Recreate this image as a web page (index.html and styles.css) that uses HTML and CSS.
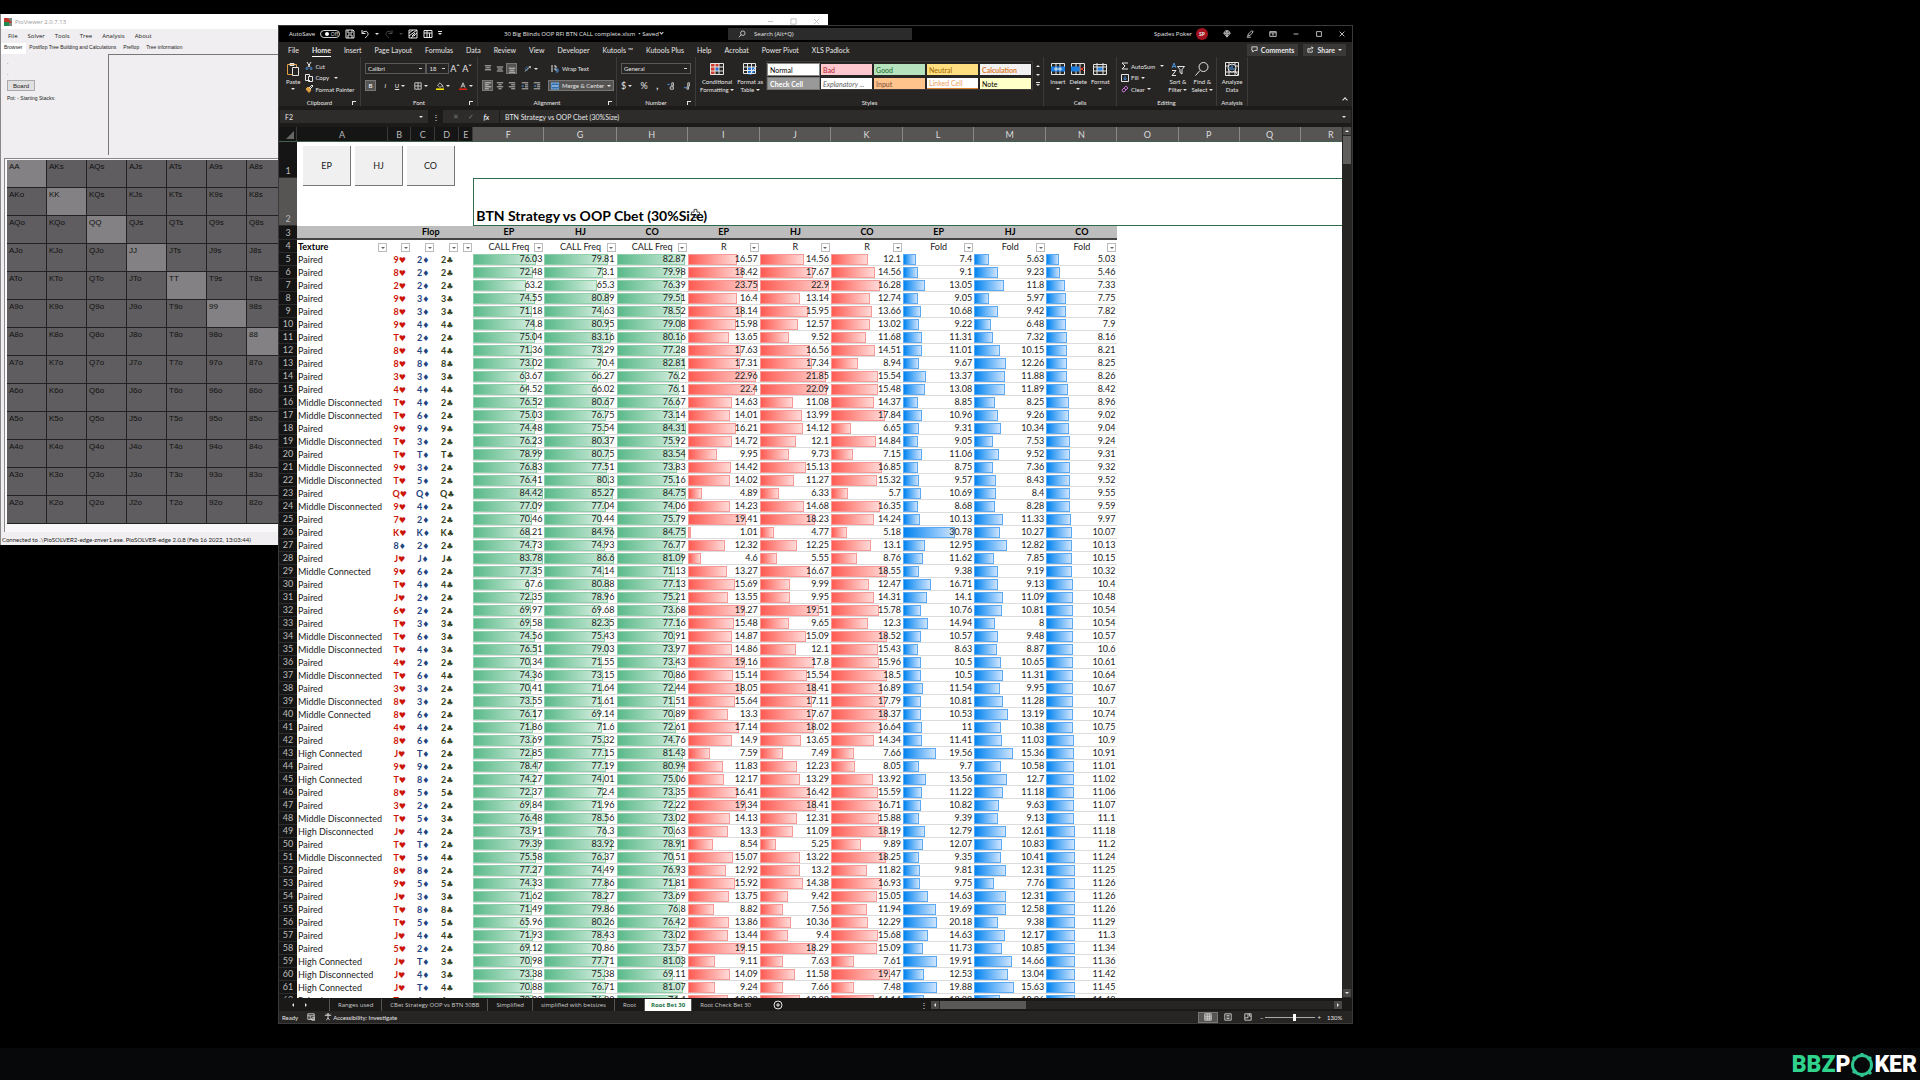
FILE: index.html
```html
<!DOCTYPE html>
<html lang="en">
<head>
  <meta charset="UTF-8" />
  <meta name="viewport" content="width=device-width, initial-scale=1.0"/>
  <title>30 Big Blinds OOP RFI BTN CALL complete.xlsm</title>
  <link rel="stylesheet" href="styles.css">
</head>
<body>

  <!-- PioViewer window -->
  <section class="window pio">
    <header class="pio-title">
      <svg class="pio-logo" viewBox="0 0 8 8"><path fill="#7d8a80" d="M0 0h8v8H0z"/><path fill="#c0392b" d="M0 0h4l4 5H0z"/><path fill="#1f8a4c" d="M0 4h5v4H0z"/></svg>
      <span class="pio-name">PioViewer 2.0.7.13</span>
      <span class="pio-controls">
        <svg viewBox="0 0 8 8"><path d="M1 4h6"/></svg>
        <svg viewBox="0 0 8 8"><path d="M1 1h6v6H1z"/></svg>
        <svg viewBox="0 0 8 8"><path d="M1 1l6 6M7 1L1 7"/></svg>
      </span>
    </header>
    <nav class="pio-menu">
      <a href="#">File</a><a href="#">Solver</a><a href="#">Tools</a><a href="#">Tree</a><a href="#">Analysis</a><a href="#">About</a>
    </nav>
    <nav class="pio-tabs">
      <a href="#" class="active">Browser</a><a href="#">Postflop Tree Building and Calculations</a><a href="#">Preflop</a><a href="#">Tree information</a>
    </nav>
    <div class="pio-body">
      <div class="pio-side">
        <p>.</p>
        <p>.</p>
        <button type="button">Board</button>
        <p>Pot: - Starting Stacks:</p>
      </div>
      <div class="pio-pane"></div>
    </div>
    <div class="pio-matrix"><div class="hands" id="hands"></div></div>
    <footer class="pio-status">Connected to .\PioSOLVER2-edge-znver1.exe. PioSOLVER-edge 2.0.8 (Feb 16 2022, 13:03:44)</footer>
  </section>

  <!-- Excel window -->
  <section class="window excel">
    <header class="titlebar">
      <div class="quick">
        <label for="autosave">AutoSave</label>
        <span class="toggle"><input type="checkbox" id="autosave"><i></i>Off</span>
        <svg viewBox="0 0 10 10"><path d="M1 1h7l1 1v7H1zM3 1v3h4V1M3 9V6h4v3"/></svg>
        <svg viewBox="0 0 10 10"><path d="M2 1v3.500h3.500M2 4.500C4 1 8.500 2 8 5.500 7.800 7 6 8 5 9"/></svg>
        <i class="caret"></i>
        <svg class="off" viewBox="0 0 10 10"><path d="M8 1v3.500H4.500M8 4.500C6 1 1.500 2 2 5.500 2.200 7 4 8 5 9"/></svg>
        <i class="caret off"></i>
        <svg viewBox="0 0 10 10"><path d="M1 1h8v8H1zM1 4l4-3M1 7l8-6M3 9l6-5M4 4l3 3M7 4L4 7"/></svg>
        <svg viewBox="0 0 10 10"><path d="M1 1.500h8v7H1zM1 4h8M4 1.500v7M6.500 4v4.500"/></svg>
        <i class="caret bar-top"></i>
      </div>
      <div class="doc">30 Big Blinds OOP RFI BTN CALL complete.xlsm &nbsp;• Saved <i class="chev"></i></div>
      <div class="search">
        <svg viewBox="0 0 10 10"><circle cx="6" cy="4" r="2.800"/><path d="M4 6L1 9"/></svg>
        <input type="text" aria-label="Search" value="Search (Alt+Q)">
      </div>
      <div class="account">
        <span>Spades Poker</span>
        <b class="avatar">SP</b>
        <svg viewBox="0 0 10 10"><path d="M3 1h4l2 3-4 5-4-5zM1 4h8M3.500 4L5 8l1.500-4L5 1z"/></svg>
        <svg viewBox="0 0 10 10"><path d="M2 8l1-3 4-4 2 1-3 4-4 2zM1 9h5"/></svg>
        <svg viewBox="0 0 10 10"><path d="M1 2h8v6H1zM1 3.500h8M5 7V4.500M4 5.500l1-1 1 1"/></svg>
        <svg viewBox="0 0 10 10"><path d="M2 5h6"/></svg>
        <svg viewBox="0 0 10 10"><path d="M2 2h6v6H2z"/></svg>
        <svg viewBox="0 0 10 10"><path d="M2 2l6 6M8 2L2 8"/></svg>
      </div>
    </header>

    <nav class="tabs">
      <a href="#">File</a><a href="#" class="active">Home</a><a href="#">Insert</a><a href="#">Page Layout</a><a href="#">Formulas</a><a href="#">Data</a><a href="#">Review</a><a href="#">View</a><a href="#">Developer</a><a href="#">Kutools ™</a><a href="#">Kutools Plus</a><a href="#">Help</a><a href="#">Acrobat</a><a href="#">Power Pivot</a><a href="#">XLS Padlock</a>
      <span class="tab-buttons">
        <button type="button"><svg viewBox="0 0 8 8"><path d="M1 1h6v4H4L2 7V5H1z"/></svg>Comments</button>
        <button type="button"><svg viewBox="0 0 8 8"><path d="M3 3H1v4h5V5M3 5c0-2 1-3 3-3M5 1l2 1-2 2"/></svg>Share <i class="caret"></i></button>
      </span>
    </nav>

    <div class="ribbon">
      <div class="group clipboard">
        <div class="tools">
          <button type="button" class="big">
            <svg viewBox="0 0 14 14"><path stroke="#e0a040" d="M6 12.500H1.500v-10h9V5"/><path d="M4 3.500V1.500h4v2zM6.500 5.500h6v8h-6z"/></svg>
            Paste<i class="caret"></i>
          </button>
          <div class="stack">
            <button type="button"><svg viewBox="0 0 8 8"><path d="M2 0l3 5M6 0L3 5"/><circle stroke="#4a90d9" cx="2" cy="6.500" r="1"/><circle stroke="#4a90d9" cx="6" cy="6.500" r="1"/></svg>Cut</button>
            <button type="button"><svg viewBox="0 0 8 8"><path d="M5 6.500H.5v-6h4v2M3.500 2.500h4v5h-4z"/></svg>Copy &nbsp;<i class="caret"></i></button>
            <button type="button"><svg viewBox="0 0 8 8"><path d="M4 3l3-3 1 1-3 3z"/><path fill="#e0a040" stroke="#e0a040" d="M3 2l3 3-2 2.500L1 4z"/></svg>Format Painter</button>
          </div>
        </div>
        <footer>Clipboard<i class="launch"></i></footer>
      </div>

      <div class="group font">
        <div class="tools rows">
          <div class="row">
            <select class="w-name" aria-label="Font"><option>Calibri</option></select><select class="w-size" aria-label="Font size"><option>18</option></select>
            <button type="button" class="letter">Aˆ</button><button type="button" class="letter">Aˇ</button>
          </div>
          <div class="row spread">
            <button type="button" class="sel"><b>B</b></button>
            <button type="button"><em>I</em></button>
            <button type="button"><u>U</u> <i class="caret"></i></button>
            <button type="button"><svg viewBox="0 0 10 10"><path d="M1 1h8v8H1zM5 1v8M1 5h8"/></svg><i class="caret"></i></button>
            <button type="button"><svg viewBox="0 0 10 10"><path d="M2 4l3-3 3 3-3 3zM8 4l1 3"/><path fill="#ffe800" stroke="none" d="M0 8h10v2H0z"/></svg><i class="caret"></i></button>
            <button type="button"><svg viewBox="0 0 10 10"><path d="M2.500 7L5 1l2.500 6M3.500 5h3"/><path fill="#e02010" stroke="none" d="M0 8h10v2H0z"/></svg><i class="caret"></i></button>
          </div>
        </div>
        <footer>Font<i class="launch"></i></footer>
      </div>

      <div class="group align">
        <div class="tools">
          <div class="grid-icons">
            <button type="button"><svg viewBox="0 0 10 10"><path d="M1 1h8M2 3.500h6M1 6h8"/></svg></button>
            <button type="button"><svg viewBox="0 0 10 10"><path d="M1 2.500h8M2 5h6M1 7.500h8"/></svg></button>
            <button type="button" class="sel"><svg viewBox="0 0 10 10"><path d="M1 4h8M2 6.500h6M1 9h8"/></svg></button>
            <button type="button" class="wide"><svg viewBox="0 0 10 10"><path d="M1 8l7-6M6 2h2v2"/><path stroke="#4a90d9" d="M1 4l3 3M3 2l2 3"/></svg><i class="caret"></i></button>
            <button type="button" class="sel"><svg viewBox="0 0 10 10"><path d="M1 1h8M1 3.500h5M1 6h8M1 8.500h5"/></svg></button>
            <button type="button"><svg viewBox="0 0 10 10"><path d="M1 1h8M3 3.500h4M1 6h8M3 8.500h4"/></svg></button>
            <button type="button"><svg viewBox="0 0 10 10"><path d="M1 1h8M4 3.500h5M1 6h8M4 8.500h5"/></svg></button>
            <button type="button" class="wide two"><svg viewBox="0 0 10 10"><path d="M1 1h8M5 3.500h4M5 6h4M1 8.500h8"/><path stroke="#4a90d9" d="M4 5H1M2 4L1 5l1 1"/></svg><svg viewBox="0 0 10 10"><path d="M1 1h8M5 3.500h4M5 6h4M1 8.500h8"/><path stroke="#4a90d9" d="M1 5h3M3 4l1 1-1 1"/></svg></button>
          </div>
          <div class="wrap-merge">
            <button type="button"><svg viewBox="0 0 8 8"><path d="M1 0v7M3 1h2v2M3 4h2v2"/><path stroke="#4a90d9" d="M4 4h3v3H5"/></svg>Wrap Text</button>
            <button type="button" class="sel"><svg viewBox="0 0 8 8"><path fill="#2b6cb0" stroke="#7fb4e8" d="M0 1h8v6H0z"/><path d="M1 4h6"/></svg>Merge &amp; Center <i class="caret"></i></button>
          </div>
        </div>
        <footer>Alignment<i class="launch"></i></footer>
      </div>

      <div class="group number">
        <div class="tools rows">
          <div class="row"><select class="w-full" aria-label="Number format"><option>General</option></select></div>
          <div class="row spread">
            <button type="button" class="letter">$ <i class="caret"></i></button>
            <button type="button" class="letter">%</button>
            <button type="button" class="letter"><b>,</b></button>
            <button type="button"><svg viewBox="0 0 10 10"><path stroke="#4a90d9" d="M4 3H1M2 2L1 3l1 1"/><path d="M8 1v4H6V1zM4 6v3h4V6z"/></svg></button>
            <button type="button"><svg viewBox="0 0 10 10"><path d="M8 1v4H6V1zM7 6v3H5V6z"/><path stroke="#4a90d9" d="M1 7h3M3 6l1 1-1 1"/></svg></button>
          </div>
        </div>
        <footer>Number<i class="launch"></i></footer>
      </div>

      <div class="group styles">
        <div class="tools">
          <button type="button" class="big">
            <svg viewBox="0 0 14 14"><path fill="#d03a2b" stroke="none" d="M0 1h9v4H0zM0 5h5v7H0z"/><path fill="#2b6cd0" stroke="none" d="M5 5h4v4H5z"/><path d="M.5 1.500h13v11H.5zM5 1v11M9 1v11M0 5h14M0 9h14"/></svg>
            Conditional<span>Formatting <i class="caret"></i></span>
          </button>
          <button type="button" class="big">
            <svg viewBox="0 0 14 14"><path fill="#1f6fd0" stroke="none" d="M4 5h9v4l-5 4-4-1z"/><path d="M.5 1.500h12v10H.5zM4.500 1v10M8.500 1v10M0 5h13M0 8.500h13M13.500 4L7 12"/></svg>
            Format as<span>Table <i class="caret"></i></span>
          </button>
          <div class="gallery">
            <button type="button" class="st normal">Normal</button>
            <button type="button" class="st bad">Bad</button>
            <button type="button" class="st good">Good</button>
            <button type="button" class="st neutral">Neutral</button>
            <button type="button" class="st calc">Calculation</button>
            <button type="button" class="st check">Check Cell</button>
            <button type="button" class="st expl">Explanatory ...</button>
            <button type="button" class="st inputc">Input</button>
            <button type="button" class="st linked">Linked Cell</button>
            <button type="button" class="st note">Note</button>
          </div>
          <div class="gallery-nav"><i class="caret up"></i><i class="caret"></i><i class="caret bar-top"></i></div>
        </div>
        <footer>Styles</footer>
      </div>

      <div class="group cells">
        <div class="tools">
          <button type="button" class="big"><svg viewBox="0 0 14 14"><path d="M.5 1.500h13v11H.5zM5 1v11M9 1v11"/><path fill="#1f7fe0" stroke="#1f7fe0" d="M0 5h14v4H0z"/><path d="M3 7h8M5 5v4M9 5v4"/></svg>Insert<i class="caret"></i></button>
          <button type="button" class="big"><svg viewBox="0 0 14 14"><path d="M.5 1.500h13v11H.5zM5 1v11M9 1v11"/><path fill="#1f7fe0" stroke="#1f7fe0" d="M0 5h8v4H0z"/><path stroke="#e03a2b" d="M9 5l4 4M13 5L9 9"/></svg>Delete<i class="caret"></i></button>
          <button type="button" class="big"><svg viewBox="0 0 14 14"><path fill="#1f7fe0" stroke="none" d="M4 5h6v4H4z"/><path d="M.5 2.500h13v10H.5zM4 1v11M10 1v11M0 5h14M0 9h14"/></svg>Format<i class="caret"></i></button>
        </div>
        <footer>Cells</footer>
      </div>

      <div class="group editing">
        <div class="tools">
          <div class="stack">
            <button type="button"><svg viewBox="0 0 8 8"><path d="M7 1H1l3 3-3 3h6"/></svg>AutoSum &nbsp; <i class="caret"></i></button>
            <button type="button"><svg viewBox="0 0 8 8"><path d="M.5.5h7v7h-7z"/><path stroke="#4a90d9" d="M4 2v4M2.500 4.500L4 6l1.500-1.500"/></svg>Fill <i class="caret"></i></button>
            <button type="button"><svg viewBox="0 0 8 8"><path stroke="#c070d0" d="M1 5l4-4 2 2-4 4H2zM3 3l2 2"/></svg>Clear <i class="caret"></i></button>
          </div>
          <button type="button" class="big"><svg viewBox="0 0 14 14"><path stroke="#4a90d9" d="M1 6l2-5 2 5M1.500 4.500h3"/><path d="M1 8.500h4l-4 5h4M6.500 4.500h7L11 7.500V12l-2-1.500v-3z"/></svg>Sort &amp;<span>Filter <i class="caret"></i></span></button>
          <button type="button" class="big"><svg viewBox="0 0 14 14"><circle cx="8.500" cy="5" r="4.500"/><path d="M5 8.500L.5 13.500"/></svg>Find &amp;<span>Select <i class="caret"></i></span></button>
        </div>
        <footer>Editing</footer>
      </div>

      <div class="group analysis">
        <div class="tools">
          <button type="button" class="big"><svg viewBox="0 0 14 14"><path d="M.5.500h13v13H.5zM0 4h14M0 10h14M4 0v14M10 0v14"/><circle fill="#262524" cx="7" cy="6" r="4"/><path stroke="#4aa0f0" d="M5 8V5M7 8V3M9 8V6"/><path d="M10 9l3 4"/></svg>Analyze<span>Data</span></button>
        </div>
        <footer>Analysis</footer>
      </div>
      <i class="collapse"></i>
    </div>

    <div class="formula-bar">
      <div class="name-box"><input type="text" aria-label="Name box" value="F2"><i class="caret"></i></div>
      <span class="dots">⋮</span>
      <div class="fx"><span>✕</span><span>✓</span><b>fx</b></div>
      <div class="formula"><input type="text" aria-label="Formula" value="BTN Strategy vs OOP Cbet (30%Size)"><i class="caret"></i></div>
    </div>

    <div class="sheet-area">
      <div class="sheet">
        <table class="grid">
          <colgroup>
            <col class="c-head"><col class="c-a"><col class="c-b"><col class="c-c"><col class="c-c"><col class="c-e">
            <col class="c-f"><col class="c-g"><col class="c-f"><col class="c-g"><col class="c-f"><col class="c-g"><col class="c-f"><col class="c-g"><col class="c-f">
            <col class="c-o"><col class="c-o"><col class="c-o"><col class="c-o">
          </colgroup>
          <thead>
            <tr class="letters" id="letters"></tr>
          </thead>
          <tbody id="rows">
            <tr class="r1">
              <th>1</th>
              <td colspan="18">
                <div class="macros"><button type="button">EP</button><button type="button">HJ</button><button type="button">CO</button></div>
              </td>
            </tr>
            <tr class="r2">
              <th>2</th>
              <td colspan="5"></td>
              <td colspan="13" class="picked">BTN Strategy vs OOP Cbet (30%Size)</td>
            </tr>
            <tr class="r3">
              <th>3</th>
              <td></td><td colspan="4">Flop</td>
              <td>EP</td><td>HJ</td><td>CO</td><td>EP</td><td>HJ</td><td>CO</td><td>EP</td><td>HJ</td><td>CO</td>
              <td colspan="4" class="blank"></td>
            </tr>
            <tr class="r4" id="filters"></tr>
          </tbody>
        </table>
        <svg class="pointer" viewBox="0 0 12 12"><path d="M4.500 1.500h3v3h3v3h-3v3h-3v-3h-3v-3h3z"/></svg>
      </div>
      <div class="vscroll"><i class="box"><i class="caret up"></i></i><i class="thumb"></i><i class="box end"><i class="caret"></i></i></div>
    </div>

    <nav class="sheets">
      <span class="arrows"><i class="tri left"></i><i class="tri"></i></span>
      <a href="#">Ranges used</a><a href="#">CBet Strategy OOP vs BTN 30BB</a><a href="#">Simplified</a><a href="#">simplified with betsizes</a><a href="#">Root</a><a href="#" class="active">Root Bet 30</a><a href="#">Root Check Bet 30</a>
      <button type="button" class="add" aria-label="New sheet"><svg viewBox="0 0 10 10"><circle cx="5" cy="5" r="4"/><path d="M5 3v4M3 5h4"/></svg></button>
      <span class="dots">⋮</span>
      <div class="hscroll"><i class="box"><i class="tri left"></i></i><i class="thumb"></i><i class="box end"><i class="tri"></i></i></div>
    </nav>

    <footer class="status">
      <span>Ready</span>
      <svg viewBox="0 0 10 10"><path d="M1 1h8v7H1zM1 3.500h8M4 3.500V8M6 6h4v3H6z"/></svg>
      <span class="acc"><svg viewBox="0 0 10 10"><path d="M1 3h8M5 3v3M5 6L3 9M5 6l2 3M2 1l1 1M8 1L7 2"/><circle cx="5" cy="1.500" r="1"/></svg>Accessibility: Investigate</span>
      <div class="views">
        <button type="button" class="sel" aria-label="Normal view"><svg viewBox="0 0 10 10"><path d="M1 1h8v8H1zM1 4h8M1 6.500h8M4 1v8M6.500 1v8"/></svg></button>
        <button type="button" aria-label="Page layout"><svg viewBox="0 0 10 10"><path d="M1 1h8v8H1zM3 3h4M3 5h4M3 7h4"/></svg></button>
        <button type="button" aria-label="Page break preview"><svg viewBox="0 0 10 10"><path d="M1 1h8v8H1zM1 6h4V1M7 1v3h2"/></svg></button>
      </div>
      <div class="zoom"><span>−</span><input type="range" min="10" max="250" value="150" aria-label="Zoom"><span>+</span><span class="pct">130%</span></div>
    </footer>
  </section>

  <div class="brand">
    <span class="bbz">BBZ</span><span>P</span><svg viewBox="0 0 24 24"><circle cx="12" cy="12" r="9.500"/><path d="M12 0v4M12 20v4M3 4l3 3M18 18l3 3M21 4l-3 3M3 20l3-3"/></svg><span>KER</span>
  </div>

  <script src="script.js"></script>
</body>
</html>
```

FILE: styles.css
```css
* {
  box-sizing: border-box;
}

body {
  margin: 0;
  min-height: 100vh;
  background: linear-gradient(#000 97%, #06080a 97%);
  font-family: "Open Sans", "Noto Sans", sans-serif;
  font-size: 6px;
  overflow: hidden;
}

a {
  color: inherit;
  text-decoration: none;
}

p {
  margin: 0;
}

button, input, select {
  font: inherit;
  color: inherit;
  background: none;
  border: 0;
  border-radius: 0;
  padding: 0;
  margin: 0;
  min-width: 0;
}

select {
  appearance: none;
}

svg {
  flex: none;
  fill: none;
  stroke: currentColor;
}

.window {
  position: absolute;
  display: flex;
  flex-direction: column;
  overflow: hidden;
}

/* ---------- PioViewer ---------- */

.pio {
  left: 0;
  top: 14px;
  width: 828px;
  height: 531px;
  background: #f0eef0;
  color: #222;
  border-left: 1px solid #888;
}

.pio-title {
  display: flex;
  align-items: center;
  gap: 3px;
  height: 15px;
  padding-left: 3px;
  background: #fff;
  color: #999;
}

.pio-logo {
  width: 8px;
  height: 8px;
  stroke: none;
}

.pio-controls {
  display: flex;
  gap: 16px;
  margin: 0 8px 0 auto;
  color: #bbb;
}

.pio-controls svg {
  width: 7px;
  height: 7px;
}

.pio-menu {
  display: flex;
  align-items: center;
  gap: 10px;
  height: 14px;
  padding-left: 7px;
}

.pio-tabs {
  display: flex;
  height: 11px;
  line-height: 9px;
  font-family: "Liberation Sans", Arial, sans-serif;
  font-size: 5px;
}

.pio-tabs a {
  padding: 0 4px 0 3px;
}

.pio-tabs .active {
  background: #fff;
}

.pio-body {
  display: flex;
  height: 101px;
}

.pio-side {
  display: flex;
  flex-direction: column;
  align-items: flex-start;
  gap: 3px;
  width: 107px;
  padding: 4px 6px;
  line-height: 8px;
  font-family: "Liberation Sans", Arial, sans-serif;
}

.pio-side button {
  width: 28px;
  height: 11px;
  background: #e1e0e1;
  border: 1px solid #aaa;
}

.pio-side p {
  font-size: 5px;
}

.pio-pane {
  flex: 1;
  border-left: 1px solid #777;
  border-top: 1px solid #777;
}

.pio-matrix {
  margin: 3px 0 0 3px;
  padding: 1px 0 8px 2px;
  border-left: 1px solid #888;
  border-top: 1px solid #888;
  background: #f8f8f8;
}

.hands {
  display: grid;
  grid-template-columns: repeat(7, 40px);
  grid-auto-rows: 28px;
}

.hands div {
  background: #5f5d5f;
  border-right: 1px solid #222;
  border-bottom: 1px solid #222;
  padding: 2px;
  font: 8px/9px "Liberation Sans", Arial, sans-serif;
  color: #111;
}

.hands .pair {
  background: #838183;
}

.pio-status {
  margin-top: auto;
  padding-left: 1px;
  height: 11px;
  line-height: 12px;
  font-family: Lato, "Open Sans", sans-serif;
}

/* ---------- Excel ---------- */

.excel {
  left: 278px;
  right: 567px;
  top: 25px;
  bottom: 56px;
  background: #262524;
  color: #e6e6e6;
  border: 1px solid #3a3a3a;
}

.excel svg {
  width: 8px;
  height: 8px;
}

.caret {
  display: inline-block;
  flex: none;
  border: 2px solid transparent;
  border-top-color: currentColor;
  border-bottom: 0;
  vertical-align: middle;
}

.caret.up {
  transform: rotate(180deg);
}

.caret.bar-top {
  position: relative;
}

.caret.bar-top::before {
  content: "";
  position: absolute;
  left: -2px;
  top: -4px;
  width: 4px;
  height: 1px;
  background: currentColor;
}

.off {
  opacity: .3;
}

.titlebar {
  display: grid;
  grid-template-columns: 225px 224px 184px 1fr;
  align-items: center;
  height: 16px;
  flex: none;
  background: #000;
}

.quick {
  display: flex;
  align-items: center;
  gap: 5px;
  padding-left: 10px;
}

.quick svg {
  width: 10px;
  height: 10px;
}

.toggle {
  display: flex;
  align-items: center;
  justify-content: space-around;
  width: 20px;
  height: 8px;
  border: 1px solid #ccc;
  border-radius: 4px;
  font-size: 5px;
  line-height: 6px;
}

.toggle input {
  appearance: none;
  width: 0;
}

.toggle i {
  width: 4px;
  height: 4px;
  border-radius: 50%;
  background: #fff;
}

.chev {
  display: inline-block;
  width: 3px;
  height: 3px;
  border-right: 1px solid;
  border-bottom: 1px solid;
  transform: rotate(45deg);
  vertical-align: 2px;
}

.search {
  display: flex;
  align-items: center;
  gap: 8px;
  height: 12px;
  padding-left: 10px;
  background: #2b2b2b;
}

.search input {
  flex: 1;
}

.account {
  display: flex;
  align-items: center;
  justify-content: flex-end;
  gap: 15px;
  padding-right: 6px;
}

.account span {
  margin-right: -11px;
}

.avatar {
  width: 12px;
  height: 12px;
  border-radius: 50%;
  background: #a4121f;
  font-size: 5px;
  line-height: 12px;
  text-align: center;
}

.tabs {
  display: flex;
  gap: 13px;
  align-items: center;
  height: 15px;
  flex: none;
  padding: 0 6px 0 9px;
  font-size: 7px;
  font-family: Lato, "Open Sans", sans-serif;
}

.tabs a {
  line-height: 12px;
  white-space: nowrap;
}

.tabs .active {
  font-weight: bold;
  box-shadow: 0 1px #fff;
}

.tab-buttons {
  display: flex;
  gap: 5px;
  margin-left: auto;
}

.tab-buttons button {
  display: flex;
  align-items: center;
  gap: 3px;
  height: 12px;
  padding: 0 4px;
  background: #3a3938;
  font-weight: bold;
}

.tab-buttons svg {
  width: 7px;
  height: 7px;
}

.ribbon {
  display: flex;
  height: 49px;
  flex: none;
  font-family: Lato, "Open Sans", sans-serif;
  font-size: 6px;
}

.group {
  display: flex;
  flex-direction: column;
  border-right: 1px solid #3c3b3a;
  padding: 4px 4px 0;
}

.clipboard { width: 82px; }
.font { width: 117px; }
.align { width: 139px; }
.number { width: 79px; }
.styles { width: 348px; }
.cells { width: 73px; }
.editing { width: 100px; }
.analysis { width: 31px; }

.group footer {
  position: relative;
  text-align: center;
  line-height: 14px;
}

.launch {
  position: absolute;
  right: 0;
  top: 5px;
  width: 4px;
  height: 4px;
  border-left: 1px solid;
  border-top: 1px solid;
}

.tools {
  display: flex;
  flex: none;
  height: 35px;
  gap: 4px;
}

.clipboard .tools {
  gap: 5px;
  padding-left: 3px;
}

.tools button {
  display: flex;
  align-items: center;
  gap: 2px;
  white-space: nowrap;
}

.tools .big {
  flex-direction: column;
  justify-content: flex-start;
  gap: 0;
  line-height: 8px;
  flex: none;
}

.tools .big svg {
  width: 14px;
  height: 14px;
  margin: 1px 0 2px;
}

.tools .big .caret {
  margin-top: 2px;
}

.tools .big span .caret {
  margin-top: 0;
}

.cells .tools,
.analysis .tools {
  justify-content: center;
}

.stack {
  display: flex;
  flex-direction: column;
  justify-content: space-between;
  padding-bottom: 2px;
}

.stack button {
  height: 10px;
}

.tools.rows {
  flex-direction: column;
  gap: 6px;
  padding-top: 2px;
}

.row {
  display: flex;
  align-items: center;
  height: 11px;
}

.spread {
  justify-content: space-between;
}

.row select {
  height: 11px;
  padding: 0 2px;
  border: 1px solid #5a5958;
  background: linear-gradient(#ccc, #ccc) no-repeat right 3px center / 3px 1px;
}

.w-name { width: 62px; }
.w-size { width: 23px; }
.w-full { width: 70px; }

.letter {
  font-size: 9px;
}

.font .letter {
  width: 11px;
  margin-left: 1px;
}

.sel {
  background: #555453;
  outline: 1px solid #777;
  outline-offset: -1px;
}

.row .sel {
  width: 11px;
  height: 11px;
  justify-content: center;
}

.grid-icons {
  display: grid;
  grid-template-columns: 11px 11px 11px 26px;
  grid-auto-rows: 11px;
  gap: 6px 1px;
  padding-top: 2px;
}

.grid-icons button {
  justify-content: center;
}

.grid-icons .two {
  gap: 4px;
}

.wrap-merge {
  display: flex;
  flex-direction: column;
  gap: 6px;
  padding-top: 2px;
}

.wrap-merge button {
  height: 11px;
  padding: 0 3px;
  gap: 3px;
}

.gallery {
  display: grid;
  grid-template-columns: repeat(5, 51px);
  grid-auto-rows: 11px;
  gap: 3px 2px;
  height: 29px;
  padding: 2px 1px;
  border: 1px solid #3c3b3a;
  font-size: 7px;
}

.gallery .st {
  padding: 0 2px;
  color: #000;
  background: #fff;
}

.gallery .normal { outline: 1px solid #888; }
.gallery .bad { background: #ffc7ce; color: #b0202a; }
.gallery .good { background: #b6e3bd; color: #17692a; }
.gallery .neutral { background: #ffdf80; color: #9c6500; }
.gallery .calc { background: #f2f2f2; color: #e08030; font-weight: bold; }
.gallery .check { background: #999; color: #fff; font-weight: bold; outline: 1px solid #777; }
.gallery .expl { color: #666; font-style: italic; }
.gallery .inputc { background: #ffc48c; color: #7a4a3a; }
.gallery .linked { color: #f0a060; border-bottom: 1px solid #e08030; }
.gallery .note { background: #ffffc8; }

.gallery-nav {
  display: flex;
  flex-direction: column;
  justify-content: space-around;
  height: 29px;
}

.styles .tools {
  gap: 3px;
}

.collapse {
  align-self: flex-end;
  margin: 0 5px 4px auto;
  width: 4px;
  height: 4px;
  border-left: 1px solid;
  border-top: 1px solid;
  transform: rotate(45deg);
}

.formula-bar {
  display: flex;
  align-items: center;
  height: 21px;
  flex: none;
  padding: 0 1px;
  background: #1c1b1a;
  font-family: Lato, "Open Sans", sans-serif;
  font-size: 7px;
}

.formula-bar > div {
  display: flex;
  align-items: center;
  height: 13px;
  padding: 0 5px;
  background: #2d2c2b;
}

.name-box {
  width: 148px;
}

.name-box input, .formula input {
  flex: 1;
}

.dots {
  width: 15px;
  text-align: center;
  font-size: 8px;
}

.fx {
  width: 56px;
  justify-content: space-around;
}

.fx span {
  color: #777;
}

.fx b {
  font-style: italic;
}

.formula {
  flex: 1;
  margin-left: 1px;
}

/* ---------- Worksheet ---------- */

.sheet-area {
  display: flex;
  flex: 1;
  min-height: 0;
}

.sheet {
  position: relative;
  flex: 1;
  min-width: 0;
  overflow: hidden;
  background: #fff;
}

.grid {
  width: 1083px;
  table-layout: fixed;
  border-spacing: 0;
  color: #222;
  font: 9px/12px Lato, "Open Sans", sans-serif;
}

.c-head { width: 18px; }
.c-a { width: 91px; }
.c-b { width: 23px; }
.c-c { width: 24px; }
.c-e { width: 14px; }
.c-f { width: 71px; }
.c-g { width: 72px; }
.c-o { width: 61px; }

.grid td, .grid th {
  position: relative;
  padding: 0;
  white-space: nowrap;
}

.grid th {
  background: #151515;
  color: #bbb;
  font-weight: normal;
  border-bottom: 1px solid #2c2c2c;
}

.grid .letters th {
  height: 15px;
  padding-top: 1px;
  border-right: 1px solid #3a3a3a;
  border-bottom: 1px solid #41614f;
}

.grid .letters .on {
  background: #565554;
  color: #ddd;
  border-right-color: #888;
}

.letters .corner::after {
  content: "";
  position: absolute;
  right: 2px;
  bottom: 2px;
  border: 4px solid #666;
  border-left-color: transparent;
  border-top-color: transparent;
}

.r1 td { height: 36px; }
.r2 td { height: 48px; }
.r1 th, .r2 th { vertical-align: bottom; }

.grid .r2 th {
  background: #565554;
}

.macros {
  position: absolute;
  left: 6px;
  top: 4px;
  z-index: 1;
  display: flex;
  gap: 4px;
}

.macros button {
  width: 48px;
  height: 40px;
  background: #f0f0f0;
  border-right: 1px solid #777;
  border-bottom: 1px solid #777;
  font-size: 9px;
}

.grid .picked {
  border: 1px solid #2f6b4c;
  border-right: 0;
  padding-left: 2px;
  vertical-align: bottom;
  font-size: 14px;
  line-height: 18px;
  font-weight: bold;
  color: #000;
}

.r3 td {
  height: 14px;
  background: #bdbdbd;
  border-bottom: 2px solid #444;
  font-weight: bold;
  text-align: center;
  color: #000;
}

.r3 .blank {
  background: #fff;
  border: 0;
}

.r4 td {
  height: 13px;
  text-align: center;
}

.r4 td:nth-child(2) {
  font-weight: bold;
  text-align: left;
  color: #000;
}

.filter {
  position: absolute;
  right: 1px;
  bottom: 1px;
  display: flex;
  align-items: center;
  justify-content: center;
  width: 9px;
  height: 9px;
  background: #fff;
  border: 1px solid #bbb;
  color: #666;
}

.data td, .data th {
  height: 13px;
}

.grid .texture,
.grid .r4 td:nth-child(2) {
  padding-left: 1px;
}

.card {
  text-align: center;
  font-weight: bold;
}

.card span {
  font: 8px/8px "DejaVu Sans", sans-serif;
}

.card.h { color: #cc1408; }
.card.d { color: #1f4480; }
.card.c { color: #34401c; }

.num {
  text-align: right;
  border-bottom: 1px solid #dcdcdc;
}

.grid .num {
  padding-right: 2px;
}

.num span {
  position: relative;
}

.num .bar {
  position: absolute;
  left: 0;
  top: 1px;
  height: 11px;
  border: 1px solid;
}

.green .bar { background: linear-gradient(90deg, #5ab98a, #d6efe0); border-color: #8fd0ab; }
.red .bar { background: linear-gradient(90deg, #ff5b52, #ffdad8); border-color: #f79a97; }
.blue .bar { background: linear-gradient(90deg, #0083f0, #cde4ff); border-color: #5aa9f2; }

.pointer {
  position: absolute;
  left: 411px;
  top: 81px;
  stroke: #333;
}

.excel .pointer {
  width: 11px;
  height: 11px;
}

.vscroll {
  display: flex;
  flex-direction: column;
  width: 10px;
  background: #262524;
}

.box {
  display: flex;
  align-items: center;
  justify-content: center;
  width: 8px;
  height: 8px;
  background: #4a4948;
}

.end {
  margin-top: auto;
}

.vscroll .box {
  margin-left: 1px;
}

.vscroll .end {
  margin-bottom: 1px;
}

.vscroll .thumb {
  width: 8px;
  height: 28px;
  margin: 1px;
  background: #5f5e5d;
}

.sheets {
  display: flex;
  align-items: center;
  height: 13px;
  flex: none;
  background: #1a1918;
  line-height: 12px;
}

.arrows {
  display: flex;
  gap: 11px;
  width: 50px;
  padding-left: 13px;
}

.tri {
  border: 2px solid transparent;
  border-left-color: currentColor;
  border-right: 0;
}

.tri.left {
  transform: rotate(180deg);
}

.sheets a {
  padding: 0 8px;
  border-left: 1px solid #555;
  color: #ccc;
  white-space: nowrap;
}

.sheets .active {
  padding: 0 6px;
  background: #fff;
  color: #217346;
  font-weight: bold;
}

.add {
  display: flex;
  margin-left: 14px;
}

.excel .add svg {
  width: 10px;
  height: 10px;
}

.sheets .dots {
  margin-left: auto;
}

.hscroll {
  display: flex;
  align-items: center;
  width: 411px;
  margin-right: 10px;
  background: #262524;
}

.hscroll .thumb {
  width: 86px;
  height: 8px;
  margin-left: 1px;
  background: #5a5958;
}

.hscroll .end {
  margin: 0 0 0 auto;
}

.status {
  display: flex;
  align-items: center;
  gap: 9px;
  height: 12px;
  flex: none;
  padding-left: 3px;
  font-family: Lato, "Open Sans", sans-serif;
}

.acc {
  display: flex;
  align-items: center;
  gap: 1px;
}

.views {
  display: flex;
  margin-left: auto;
}

.views button {
  display: flex;
  align-items: center;
  justify-content: center;
  width: 20px;
  height: 11px;
}

.zoom {
  display: flex;
  align-items: center;
  gap: 2px;
  width: 92px;
  margin-left: -7px;
}

.zoom input {
  appearance: none;
  width: 50px;
  height: 7px;
  background: linear-gradient(#aaa, #aaa) no-repeat center / 100% 1px;
}

.zoom input::-webkit-slider-thumb {
  appearance: none;
  width: 3px;
  height: 7px;
  background: #fff;
}

.pct {
  margin-left: 4px;
}

/* ---------- Brand ---------- */

.brand {
  position: absolute;
  right: 3px;
  bottom: 2px;
  display: flex;
  align-items: center;
  color: #fff;
  font: 900 23px/26px Roboto, sans-serif;
}

.brand .bbz {
  color: #2fd38c;
}

.brand svg {
  width: 24px;
  height: 24px;
  stroke: #2fc590;
  stroke-width: 3;
}
```

FILE: script.js
```js
const columns = [
  // tone, pixels per unit of value in a 71px wide cell
  ["green", 0.825], ["green", 0.79], ["green", 0.82],
  ["red", 2.95], ["red", 3.03], ["red", 2.98],
  ["blue", 1.69], ["blue", 2.52], ["blue", 2.52]
];

const textures = {
  P: "Paired",
  MD: "Middle Disconnected",
  MC: "Middle Connected",
  HC: "High Connected",
  HD: "High Disconnected"
};

const suits = { h: "♥", d: "♦", c: "♣" };

const flops = `P 9h 2d 2c 76.03 79.81 82.87 16.57 14.56 12.1 7.4 5.63 5.03
P 8h 2d 2c 72.48 73.1 79.98 18.42 17.67 14.56 9.1 9.23 5.46
P 2h 2d 2c 63.2 65.3 76.39 23.75 22.9 16.28 13.05 11.8 7.33
P 9h 3d 3c 74.55 80.89 79.51 16.4 13.14 12.74 9.05 5.97 7.75
P 8h 3d 3c 71.18 74.63 78.52 18.14 15.95 13.66 10.68 9.42 7.82
P 9h 4d 4c 74.8 80.95 79.08 15.98 12.57 13.02 9.22 6.48 7.9
P Th 2d 2c 75.04 83.16 80.16 13.65 9.52 11.68 11.31 7.32 8.16
P 8h 4d 4c 71.36 73.29 77.28 17.63 16.56 14.51 11.01 10.15 8.21
P 8h 8d 8c 73.02 70.4 82.81 17.31 17.34 8.94 9.67 12.26 8.25
P 3h 3d 3c 63.67 66.27 76.2 22.96 21.85 15.54 13.37 11.88 8.26
P 4h 4d 4c 64.52 66.02 76.1 22.4 22.09 15.48 13.08 11.89 8.42
MD Th 4d 2c 76.52 80.67 76.67 14.63 11.08 14.37 8.85 8.25 8.96
MD Th 6d 2c 75.03 76.75 73.14 14.01 13.99 17.84 10.96 9.26 9.02
P 9h 9d 9c 74.48 75.54 84.31 16.21 14.12 6.65 9.31 10.34 9.04
MD Th 3d 2c 76.23 80.37 75.92 14.72 12.1 14.84 9.05 7.53 9.24
P Th Td Tc 78.99 80.75 83.54 9.95 9.73 7.15 11.06 9.52 9.31
MD 9h 3d 2c 76.83 77.51 73.83 14.42 15.13 16.85 8.75 7.36 9.32
MD Th 5d 2c 76.41 80.3 75.16 14.02 11.27 15.32 9.57 8.43 9.52
P Qh Qd Qc 84.42 85.27 84.75 4.89 6.33 5.7 10.69 8.4 9.55
MD 9h 4d 2c 77.09 77.04 74.06 14.23 14.68 16.35 8.68 8.28 9.59
P 7h 2d 2c 70.46 70.44 75.79 19.41 18.23 14.24 10.13 11.33 9.97
P Kh Kd Kc 68.21 84.96 84.75 1.01 4.77 5.18 30.78 10.27 10.07
P 8d 2d 2c 74.73 74.93 76.77 12.32 12.25 13.1 12.95 12.82 10.13
P Jh Jd Jc 83.78 86.6 81.09 4.6 5.55 8.76 11.62 7.85 10.15
MC 9h 6d 2c 77.35 74.14 71.13 13.27 16.67 18.55 9.38 9.19 10.32
P Th 4d 4c 67.6 80.88 77.13 15.69 9.99 12.47 16.71 9.13 10.4
P Jh 2d 2c 72.35 78.96 75.21 13.55 9.95 14.31 14.1 11.09 10.48
P 6h 2d 2c 69.97 69.68 73.68 19.27 19.51 15.78 10.76 10.81 10.54
P Th 3d 3c 69.58 82.35 77.16 15.48 9.65 12.3 14.94 8 10.54
MD Th 6d 3c 74.56 75.43 70.91 14.87 15.09 18.52 10.57 9.48 10.57
MD Th 4d 3c 76.51 79.03 73.97 14.86 12.1 15.43 8.63 8.87 10.6
P 4h 2d 2c 70.34 71.55 73.43 19.16 17.8 15.96 10.5 10.65 10.61
MD Th 6d 4c 74.36 73.15 70.86 15.14 15.54 18.5 10.5 11.31 10.64
P 3h 3d 2c 70.41 71.64 72.44 18.05 18.41 16.89 11.54 9.95 10.67
MD 8h 3d 2c 73.55 71.61 71.51 15.64 17.11 17.79 10.81 11.28 10.7
MC 8h 6d 2c 76.17 69.14 70.89 13.3 17.67 18.37 10.53 13.19 10.74
P 4h 4d 2c 71.86 71.6 72.61 17.14 18.02 16.64 11 10.38 10.75
P 8h 6d 6c 73.69 75.32 74.76 14.9 13.65 14.34 11.41 11.03 10.9
HC Jh Td 2c 72.85 77.15 81.43 7.59 7.49 7.66 19.56 15.36 10.91
P 9h 9d 2c 78.47 77.19 80.94 11.83 12.23 8.05 9.7 10.58 11.01
HC Th 8d 2c 74.27 74.01 75.06 12.17 13.29 13.92 13.56 12.7 11.02
P 8h 5d 5c 72.37 72.4 73.35 16.41 16.42 15.59 11.22 11.18 11.06
P 3h 2d 2c 69.84 71.96 72.22 19.34 18.41 16.71 10.82 9.63 11.07
MD Th 5d 3c 76.48 78.56 73.02 14.13 12.31 15.88 9.39 9.13 11.1
HD Jh 4d 2c 73.91 76.3 70.63 13.3 11.09 18.19 12.79 12.61 11.18
P Th Td 2c 79.39 83.92 78.91 8.54 5.25 9.89 12.07 10.83 11.2
MD Th 5d 4c 75.58 76.37 70.51 15.07 13.22 18.25 9.35 10.41 11.24
P 8h 8d 2c 77.27 74.49 76.93 12.92 13.2 11.82 9.81 12.31 11.25
P 9h 5d 5c 74.33 77.86 71.81 15.92 14.38 16.93 9.75 7.76 11.26
P Jh 3d 3c 71.62 78.27 73.69 13.75 9.42 15.05 14.63 12.31 11.26
P Th 8d 8c 71.49 79.86 76.8 8.82 7.56 11.94 19.69 12.58 11.26
P Th 5d 5c 65.96 80.26 76.42 13.86 10.36 12.29 20.18 9.38 11.29
P Jh 4d 4c 71.93 78.43 73.02 13.44 9.4 15.68 14.63 12.17 11.3
P 5h 2d 2c 69.12 70.86 73.57 19.15 18.29 15.09 11.73 10.85 11.34
HC Jh Td 3c 70.98 77.71 81.03 9.11 7.63 7.61 19.91 14.66 11.36
HD Jh 4d 3c 73.38 75.38 69.11 14.09 11.58 19.47 12.53 13.04 11.42
HC Jh Td 4c 70.88 76.71 81.07 9.24 7.66 7.48 19.88 15.63 11.45
P Th 6d 6c 72.02 76.22 74.4 13.33 13.22 14.14 12.22 10.26 11.48`;

function drawHands() {
  const ranks = "AKQJT98765432";
  let html = "";
  for (let r = 0; r < 13; r++) {
    for (let c = 0; c < 7; c++) {
      const name = r === c ? ranks[r] + ranks[c]
        : r < c ? ranks[r] + ranks[c] + "s"
        : ranks[c] + ranks[r] + "o";
      html += `<div class="${r === c ? "pair" : ""}">${name}</div>`;
    }
  }
  document.getElementById("hands").innerHTML = html;
}

function drawHeaders() {
  let html = `<th class="corner"></th>`;
  "ABCDEFGHIJKLMNOPQR".split("").forEach(l => {
    html += `<th class="${l >= "F" ? "on" : ""}">${l}</th>`;
  });
  document.getElementById("letters").innerHTML = html;

  const names = ["Texture", "", "", "", "", "CALL Freq", "CALL Freq", "CALL Freq", "R", "R", "R", "Fold", "Fold", "Fold"];
  html = "<th>4</th>";
  names.forEach(n => {
    html += `<td>${n}<button type="button" class="filter" aria-label="Filter"><i class="caret"></i></button></td>`;
  });
  document.getElementById("filters").innerHTML = html + `<td colspan="4"></td>`;
}

function drawRows() {
  const body = document.getElementById("rows");
  flops.split("\n").forEach((line, index) => {
    const parts = line.split(" ");
    const row = document.createElement("tr");
    row.className = "data";
    let html = `<th>${index + 5}</th><td class="texture">${textures[parts[0]]}</td>`;
    parts.slice(1, 4).forEach(card => {
      html += `<td class="card ${card[1]}">${card[0]}<span>${suits[card[1]]}</span></td>`;
    });
    html += "<td></td>";
    parts.slice(4).forEach((value, i) => {
      const width = Math.min(98, value * columns[i][1] / 71 * 100).toFixed(1);
      html += `<td class="num ${columns[i][0]}"><i class="bar" style="width:${width}%"></i><span>${value}</span></td>`;
    });
    row.innerHTML = html + `<td colspan="4"></td>`;
    body.appendChild(row);
  });
}

drawHands();
drawHeaders();
drawRows();
```
